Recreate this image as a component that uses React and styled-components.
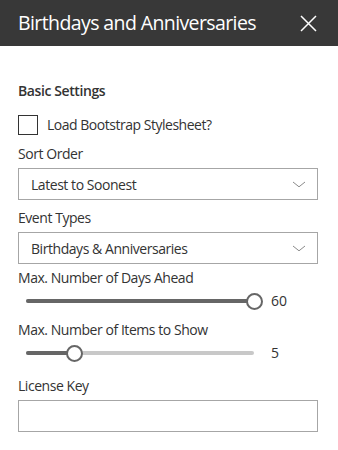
import React from 'react';
import styled, { createGlobalStyle } from 'styled-components';

const Global = createGlobalStyle`
  html, body { margin: 0; padding: 0; background: #ffffff; }
  body {
    font-family: "Segoe UI", "Open Sans", "Noto Sans", sans-serif;
    color: #333333;
    -webkit-font-smoothing: antialiased;
  }
  * { box-sizing: border-box; }
`;

const Panel = styled.div`
  width: 338px;
  height: 450px;
  background: #ffffff;
  display: flex;
  flex-direction: column;
  overflow: hidden;
`;

const Header = styled.header`
  height: 46px;
  flex: none;
  background: #383838;
  display: flex;
  align-items: center;
  justify-content: space-between;
  padding: 0 21px 0 18px;
`;

const Title = styled.h1`
  margin: 0;
  font-size: 19.5px;
  font-weight: 400;
  line-height: 28px;
  color: #ffffff;
  letter-spacing: -0.6px;
  white-space: nowrap;
`;

const CloseButton = styled.button`
  border: 0;
  background: none;
  padding: 0;
  width: 18px;
  height: 18px;
  display: flex;
  align-items: center;
  justify-content: center;
  cursor: pointer;
`;

const Content = styled.div`
  display: flex;
  flex-direction: column;
  padding: 0 20px 0 18px;
`;

const GroupTitle = styled.div`
  margin-top: 35px;
  font-size: 14px;
  font-weight: 600;
  line-height: 20px;
  letter-spacing: -0.4px;
  color: #333333;
`;

const CheckRow = styled.label`
  margin-top: 14px;
  display: flex;
  align-items: center;
  gap: 9px;
  height: 20px;
`;

const CheckBox = styled.span`
  width: 20px;
  height: 20px;
  border: 1px solid #333333;
  background: #ffffff;
  flex: none;
`;

const Text = styled.span`
  font-size: 14px;
  line-height: 20px;
  letter-spacing: -0.48px;
  color: #333333;
`;

const FieldLabel = styled.div`
  margin-top: ${p => p.$gap}px;
  font-size: 14px;
  line-height: 20px;
  letter-spacing: -0.45px;
  color: #333333;
`;

const Dropdown = styled.div`
  margin-top: 4px;
  height: 32px;
  border: 1px solid #a6a6a6;
  display: flex;
  align-items: center;
  justify-content: space-between;
  padding: 0 11px 0 12px;
  font-size: 14px;
  letter-spacing: -0.45px;
  color: #333333;
`;

const SliderRow = styled.div`
  height: 26px;
  display: flex;
  align-items: center;
`;

const SliderBox = styled.div`
  position: relative;
  margin: 0 8px;
  width: 228px;
  height: 4px;
  border-radius: 2px;
  background: #c8c8c8;
`;

const SliderActive = styled.div`
  position: absolute;
  left: 0;
  top: 0;
  height: 4px;
  border-radius: 2px;
  background: #666666;
`;

const Thumb = styled.span`
  position: absolute;
  top: 50%;
  width: 17px;
  height: 17px;
  margin: -8.5px 0 0 -8.5px;
  border-radius: 50%;
  border: 2px solid #666666;
  background: #ffffff;
`;

const SliderValue = styled.span`
  margin-left: 9px;
  font-size: 14px;
  line-height: 20px;
  color: #333333;
`;

const TextField = styled.div`
  margin-top: 4px;
  height: 32px;
  border: 1px solid #a6a6a6;
`;

const Chevron = () => (
  <svg width="14" height="7" viewBox="0 0 14 7" aria-hidden="true">
    <polyline points="1,1 7,5.8 13,1" fill="none" stroke="#8a8a8a" strokeWidth="1" />
  </svg>
);

const CloseIcon = () => (
  <svg width="17" height="17" viewBox="0 0 17 17" aria-hidden="true">
    <path d="M1 1 L16 16 M16 1 L1 16" stroke="#ffffff" strokeWidth="1.5" fill="none" />
  </svg>
);

const Slider = ({ value, min, max }) => {
  const pct = ((value - min) / (max - min)) * 100;
  return (
    <SliderRow>
      <SliderBox>
        <SliderActive style={{ width: `${pct}%` }} />
        <Thumb style={{ left: `${pct}%` }} />
      </SliderBox>
      <SliderValue>{value}</SliderValue>
    </SliderRow>
  );
};

export default function App() {
  return (
    <Panel>
      <Global />
      <Header>
        <Title>Birthdays and Anniversaries</Title>
        <CloseButton aria-label="Close"><CloseIcon /></CloseButton>
      </Header>
      <Content>
        <GroupTitle>Basic Settings</GroupTitle>
        <CheckRow>
          <CheckBox />
          <Text>Load Bootstrap Stylesheet?</Text>
        </CheckRow>
        <FieldLabel $gap={9}>Sort Order</FieldLabel>
        <Dropdown>
          <span>Latest to Soonest</span>
          <Chevron />
        </Dropdown>
        <FieldLabel $gap={8}>Event Types</FieldLabel>
        <Dropdown>
          <span>Birthdays &amp; Anniversaries</span>
          <Chevron />
        </Dropdown>
        <FieldLabel $gap={4}>Max. Number of Days Ahead</FieldLabel>
        <Slider value={60} min={1} max={60} />
        <FieldLabel $gap={6}>Max. Number of Items to Show</FieldLabel>
        <Slider value={5} min={1} max={20} />
        <FieldLabel $gap={10}>License Key</FieldLabel>
        <TextField />
      </Content>
    </Panel>
  );
}
